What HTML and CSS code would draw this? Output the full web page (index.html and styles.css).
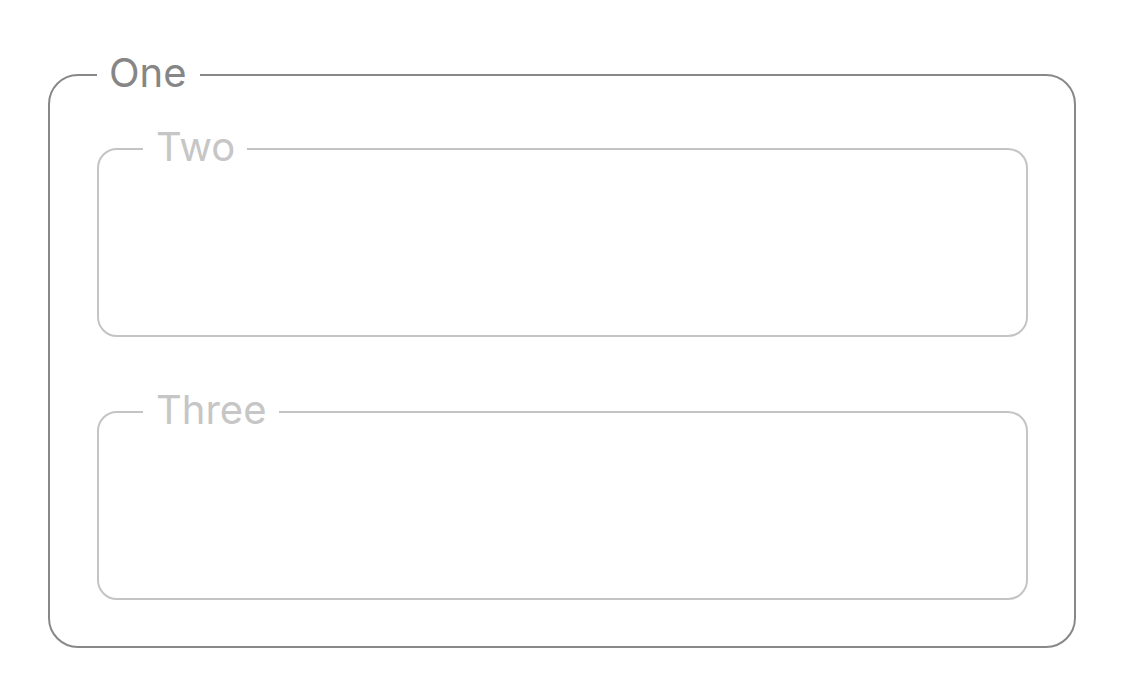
FILE: index.html
```html
<!DOCTYPE html>
<html lang="en">
<head>
    <meta charset="UTF-8">
    <meta name="viewport" content="width=device-width, initial-scale=1.0">
    <title>Nested groups</title>
    <link rel="stylesheet" href="styles.css">
</head>
<body>

    <fieldset class="group outer">
        <legend>One</legend>

        <fieldset class="group inner">
            <legend>Two</legend>
        </fieldset>

        <fieldset class="group inner">
            <legend>Three</legend>
        </fieldset>
    </fieldset>

</body>
</html>
```

FILE: styles.css
```css
body {
    font-family: Inter, 'Noto Sans', sans-serif;
    background-color: rgb(255, 255, 255);
    margin: 0;
    padding: 51px 0 0 0;
}

.group {
    margin: 0;
    min-width: 0;
}

/* text sits a little above the border line */
.group legend {
    font-size: 40px;
    line-height: 44px;
    font-weight: 400;
}

.outer {
    margin: 0 49px 0 48px;
    padding: 26px 46px 46px 47px;
    border: 2px solid rgb(136, 136, 136);
    border-radius: 30px;
}

.outer > legend {
    padding: 0 13px 4px 12px;
    color: rgb(134, 134, 134);
}

.inner {
    padding: 0 44px 162px 44px;
    border: 2px solid rgb(196, 196, 196);
    border-radius: 20px;
}

.inner + .inner {
    margin-top: 51px;
}

.inner > legend {
    padding: 0 12px 4px 13px;
    color: rgb(198, 198, 198);
}
```
